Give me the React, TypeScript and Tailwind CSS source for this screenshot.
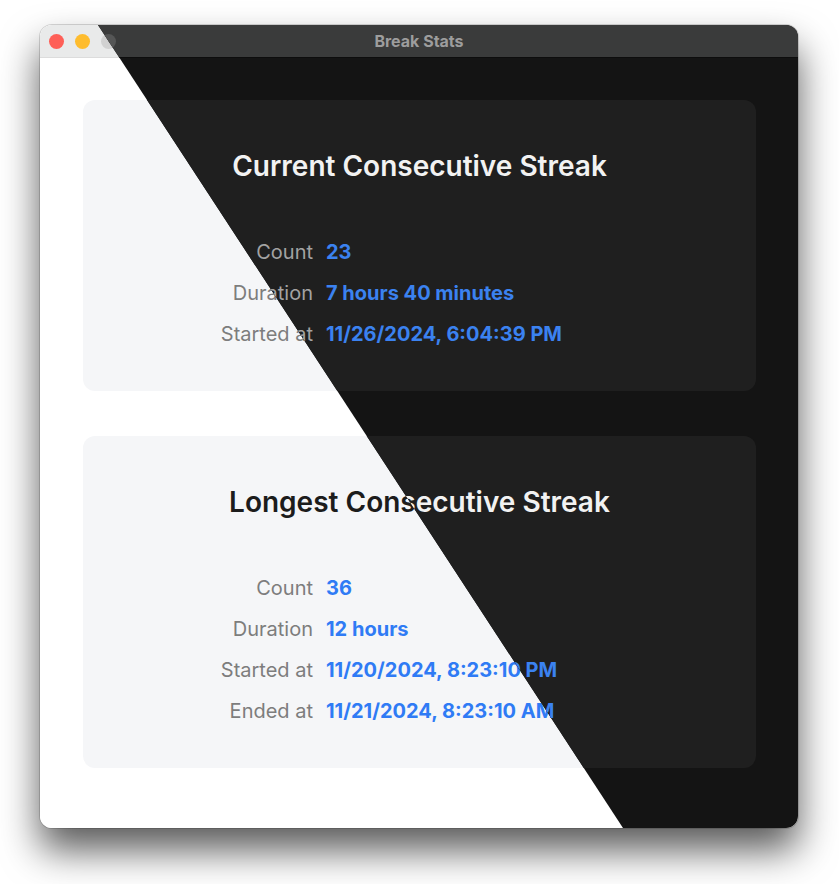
import React from "react";

type Theme = "light" | "dark";

const font = { fontFamily: "Inter, 'Noto Sans', 'Liberation Sans', sans-serif" };

function Row({ label, value, theme }: { label: string; value: string; theme: Theme }) {
  return (
    <>
      <div
        className={
          "text-right text-[20px] leading-[41px] " +
          (theme === "light" ? "text-[#7d7d7d]" : "text-[#a3a3a3]")
        }
      >
        {label}
      </div>
      <div
        className={
          "text-left text-[20px] leading-[41px] font-bold " +
          (theme === "light" ? "text-[#2f7bf5]" : "text-[#3b82f0]")
        }
      >
        {value}
      </div>
    </>
  );
}

function Card({
  title,
  rows,
  theme,
  height,
}: {
  title: string;
  rows: [string, string][];
  theme: Theme;
  height: string;
}) {
  return (
    <div
      className={
        "rounded-[12px] flex flex-col pt-[48px] " +
        height +
        " " +
        (theme === "light" ? "bg-[#f5f6f8]" : "bg-[#1f1f1f]")
      }
    >
      <div
        className={
          "text-center text-[28px] leading-[36px] font-semibold " +
          (theme === "light" ? "text-[#1c1c1c]" : "text-[#f2f2f2]")
        }
      >
        {title}
      </div>
      <div className="grid grid-cols-[230px_1fr] gap-x-[13px] mt-[48px]">
        {rows.map(([l, v]) => (
          <Row key={l} label={l} value={v} theme={theme} />
        ))}
      </div>
    </div>
  );
}

function WindowContent({ theme }: { theme: Theme }) {
  const light = theme === "light";
  return (
    <div className={"w-full h-full flex flex-col " + (light ? "bg-white" : "bg-[#141414]")}>
      <div
        className={
          "relative h-[33px] shrink-0 flex items-center pl-[9px] gap-[11px] border-b " +
          (light ? "bg-[#e9eaea] border-[#dcdcdc]" : "bg-[#3a3b3b] border-[#0d0d0d]")
        }
      >
        <div className="w-[15px] h-[15px] rounded-full bg-[#fe5f57]" />
        <div className="w-[15px] h-[15px] rounded-full bg-[#febc2e]" />
        <div
          className={"w-[15px] h-[15px] rounded-full " + (light ? "bg-[#d1d1d1]" : "bg-[#555656]")}
        />
        <div
          className={
            "absolute inset-0 flex items-center justify-center text-[16px] font-bold pointer-events-none " +
            (light ? "text-[#8a8a8a]" : "text-[#9d9d9d]")
          }
        >
          Break Stats
        </div>
      </div>
      <div className="flex flex-col pl-[43px] pr-[42px] pt-[42px] gap-[45px]">
        <Card
          theme={theme}
          height="h-[291px]"
          title="Current Consecutive Streak"
          rows={[
            ["Count", "23"],
            ["Duration", "7 hours 40 minutes"],
            ["Started at", "11/26/2024, 6:04:39 PM"],
          ]}
        />
        <Card
          theme={theme}
          height="h-[332px]"
          title="Longest Consecutive Streak"
          rows={[
            ["Count", "36"],
            ["Duration", "12 hours"],
            ["Started at", "11/20/2024, 8:23:10 PM"],
            ["Ended at", "11/21/2024, 8:23:10 AM"],
          ]}
        />
      </div>
    </div>
  );
}

export default function App() {
  return (
    <div className="w-[839px] h-[884px] bg-white pt-[25px] pl-[40px]" style={font}>
      <div className="relative w-[758px] h-[803px] rounded-[12px] overflow-hidden shadow-[0_22px_38px_rgba(0,0,0,0.65),0_0_0_1px_rgba(0,0,0,0.15)]">
        <WindowContent theme="light" />
        <div className="absolute inset-0 [clip-path:polygon(58px_0,100%_0,100%_100%,583px_100%)]">
          <WindowContent theme="dark" />
        </div>
      </div>
    </div>
  );
}
